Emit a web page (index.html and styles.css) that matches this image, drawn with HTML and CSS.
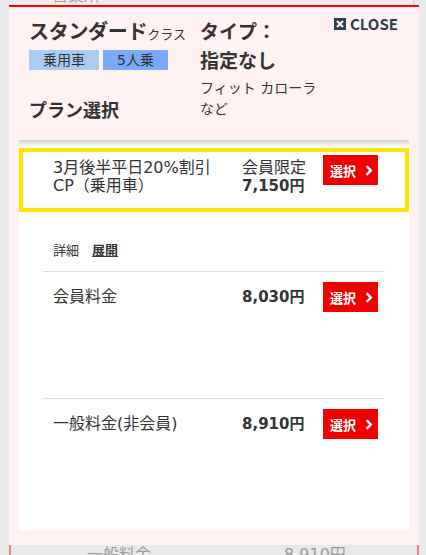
FILE: index.html
```html
<!DOCTYPE html>
<html lang="ja">
<head>
<meta charset="utf-8">
<title>プラン選択</title>
<link rel="stylesheet" href="styles.css">
</head>
<body>
<div class="page-top"><span class="page-top-text">営業所</span></div>
<div class="modal">
  <div class="modal-head">
    <div class="head-left">
      <div class="car-class">スタンダード<span class="car-class-sub">クラス</span></div>
      <div class="tags">
        <span class="tag tag-type">乗用車</span>
        <span class="tag tag-seat">5人乗</span>
      </div>
      <div class="plan-title">プラン選択</div>
    </div>
    <div class="head-type">
      <div class="type-label">タイプ：<br>指定なし</div>
      <div class="type-desc">フィット カローラ など</div>
    </div>
    <div class="close">
      <svg class="close-icon" width="12" height="12" viewBox="0 0 12 12"><rect width="12" height="12" fill="#2c3e50"/><path d="M3 3L9 9M9 3L3 9" stroke="#fff" stroke-width="2"/></svg>
      <span>CLOSE</span>
    </div>
  </div>
  <div class="panel">
    <div class="panel-shadow"></div>
    <div class="featured">
      <div class="plan-row plan-row-featured">
        <div class="plan-name">3月後半平日20%割引<br>CP（乗用車）</div>
        <div class="plan-price"><span class="price-note">会員限定</span><br><b>7,150円</b></div>
        <a class="select-btn">選択<svg width="8" height="11" viewBox="0 0 8 11"><path d="M1.5 1.2L5.8 5.5L1.5 9.8" fill="none" stroke="#fff" stroke-width="2.4"/></svg></a>
      </div>
    </div>
    <div class="rows">
      <div class="details">詳細<span class="details-toggle">展開</span></div>
      <div class="plan-row plan-row-std">
        <div class="plan-name">会員料金</div>
        <div class="plan-price"><b>8,030円</b></div>
        <a class="select-btn">選択<svg width="8" height="11" viewBox="0 0 8 11"><path d="M1.5 1.2L5.8 5.5L1.5 9.8" fill="none" stroke="#fff" stroke-width="2.4"/></svg></a>
      </div>
      <div class="plan-row plan-row-std plan-row-last">
        <div class="plan-name">一般料金(非会員)</div>
        <div class="plan-price"><b>8,910円</b></div>
        <a class="select-btn">選択<svg width="8" height="11" viewBox="0 0 8 11"><path d="M1.5 1.2L5.8 5.5L1.5 9.8" fill="none" stroke="#fff" stroke-width="2.4"/></svg></a>
      </div>
    </div>
  </div>
</div>
<div class="page-bottom">
  <span class="pb-name">一般料金</span><span class="pb-price">8,910円</span>
</div>
</body>
</html>
```
FILE: styles.css
```css
html, body {
  margin: 0;
  padding: 0;
}
body {
  width: 426px;
  height: 555px;
  overflow: hidden;
  background: #e9e9e9;
  font-family: "DejaVu Sans", "Noto Sans CJK JP", sans-serif;
  color: #333;
}
.page-top {
  height: 5px;
  overflow: hidden;
  margin: 0 12px 0 9px;
  background: #eeeeee;
  border-right: 1px solid #cfcfcf;
}
.page-top-text {
  display: block;
  margin-top: -13px;
  padding-left: 43px;
  font-size: 16px;
  line-height: 18px;
  color: #a0a0a0;
}
.modal {
  width: 410px;
  margin-left: 9px;
  border-top: 2px solid #ff0000;
  background: #fff2f2;
  padding-bottom: 15px;
}
.modal-head {
  display: flex;
  align-items: flex-start;
  padding: 12px 21px 0 20px;
  height: 133px;
  box-sizing: border-box;
}
.head-left {
  width: 171px;
  flex: none;
}
.car-class {
  font-size: 20px;
  font-weight: bold;
  line-height: 26px;
  letter-spacing: -0.3px;
}
.car-class-sub {
  font-size: 13px;
  font-weight: normal;
  letter-spacing: 0;
}
.tags {
  display: flex;
  gap: 4px;
  margin-top: 2px;
}
.tag {
  display: block;
  height: 20px;
  line-height: 20px;
  padding: 0 14px;
  font-size: 14px;
}
.tag-type { background: #a9cdf1; }
.tag-seat { background: #78a9fa; }
.plan-title {
  margin-top: 30px;
  font-size: 18px;
  font-weight: bold;
  line-height: 22px;
}
.head-type {
  width: 128px;
  flex: none;
}
.type-label {
  font-size: 19px;
  font-weight: bold;
  line-height: 29px;
  margin-top: -1px;
}
.type-desc {
  font-size: 14px;
  line-height: 21px;
  margin-top: 2px;
}
.close {
  margin-left: auto;
  display: flex;
  align-items: center;
  gap: 4px;
  margin-top: -4px;
  font-family: "Noto Sans CJK JP", sans-serif;
  font-size: 15px;
  font-weight: bold;
  color: #2d3d4f;
  line-height: 18px;
}
.close-icon { display: block; }
.panel {
  margin: 0 10px;
  background: #fff;
}
.panel-shadow {
  height: 6px;
  background: linear-gradient(#cdcdcd, #fff);
}
.featured {
  margin-top: 2px;
  border: 4px solid #ffe600;
  padding: 3px 20px 13px 20px;
}
.plan-row {
  display: flex;
}
.plan-row-featured {
  align-items: flex-start;
}
.plan-name {
  width: 189px;
  padding-left: 10px;
  flex: none;
  font-size: 16px;
  line-height: 18px;
}
.plan-row-featured .plan-name,
.plan-row-featured .plan-price {
  margin-top: 4px;
}
.plan-price {
  width: 81px;
  flex: none;
  font-size: 16px;
  line-height: 18px;
}
.plan-price b {
  font-size: 15px;
}
.select-btn {
  display: flex;
  align-items: center;
  justify-content: space-between;
  box-sizing: border-box;
  width: 55px;
  height: 30px;
  padding: 0 5px 0 7px;
  background: #f00000;
  color: #fff;
  font-size: 13px;
  font-weight: bold;
  flex: none;
}
.select-btn svg { display: block; }
.rows {
  padding: 0 24px;
}
.details {
  padding: 30px 10px 11px;
  font-size: 13px;
  line-height: 18px;
}
.details-toggle {
  margin-left: 13px;
  font-weight: bold;
  text-decoration: underline;
}
.plan-row-std {
  border-top: 1px solid #dddddd;
  align-items: center;
  padding: 10px 0 86px;
}
.plan-row-last {
  padding-bottom: 91px;
}
.page-bottom {
  height: 10px;
  overflow: hidden;
  margin-left: 9px;
  width: 410px;
  box-sizing: border-box;
  border-left: 2px solid #e88080;
  border-right: 2px solid #e88080;
  font-size: 16px;
  line-height: 18px;
  color: #999;
  display: flex;
}
.pb-name {
  margin-left: 76px;
  margin-top: 1px;
  width: 197px;
}
.pb-price {
  margin-top: 1px;
}
```
